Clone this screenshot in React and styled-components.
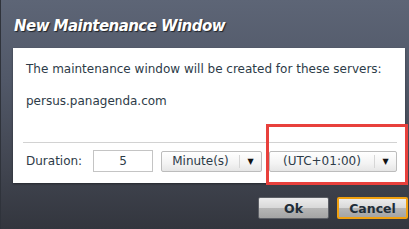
import React from 'react';
import styled, {createGlobalStyle} from 'styled-components';

const GlobalStyle = createGlobalStyle`
  html, body {
    margin: 0;
    padding: 0;
  }
  body {
    width: 409px;
    height: 229px;
    overflow: hidden;
  }
`;

const DialogFrame = styled.div`
  position: relative;
  width: 409px;
  height: 229px;
  box-sizing: border-box;
  display: flex;
  flex-direction: column;
  background: linear-gradient(to bottom, #5d6576 0%, #515868 35%, #40444f 75%, #33363e 100%);
  border-left: 1px solid #2f333b;
  font-family: "DejaVu Sans", Verdana, sans-serif;
`;

const Title = styled.h1`
  margin: 0;
  height: 48px;
  box-sizing: border-box;
  padding: 17px 0 0 13px;
  font-size: 15px;
  font-weight: bold;
  font-style: italic;
  color: #ffffff;
  letter-spacing: -0.55px;
  text-shadow: 1px 1px 1px #1e2229;
`;

const Panel = styled.div`
  margin: 0 4px 0 12px;
  height: 135px;
  box-sizing: border-box;
  background: #ffffff;
  padding: 0 8px 0 10px;
  display: flex;
  flex-direction: column;
  box-shadow: 0 1px 2px rgba(0, 0, 0, 0.4);
`;

const Message = styled.p`
  margin: ${p => p.$top}px 0 0 3px;
  font-size: 12px;
  line-height: 16px;
  color: #2d3b48;
`;

const Divider = styled.div`
  margin-top: ${p => p.$top}px;
  height: 1px;
  background: #d2d2d2;
`;

const DurationRow = styled.div`
  display: flex;
  align-items: center;
  margin-top: 7px;
  padding-left: 3px;
`;

const Label = styled.span`
  font-size: 12px;
  color: #2d3b48;
  width: 67px;
`;

const NumberBox = styled.div`
  width: 60px;
  height: 22px;
  box-sizing: border-box;
  border: 1px solid #c4c4c4;
  display: flex;
  align-items: center;
  justify-content: center;
  font-size: 12px;
  color: #2d3b48;
`;

const Select = styled.div`
  width: ${p => p.$width}px;
  margin-left: ${p => p.$gap}px;
  height: 21px;
  box-sizing: border-box;
  border: 1px solid #bcbcbc;
  border-radius: 2px;
  background: linear-gradient(to bottom, #ffffff 0%, #f3f3f3 60%, #e6e6e6 100%);
  display: flex;
  align-items: center;
  font-size: 12px;
  color: #2d3b48;
`;

const SelectText = styled.span`
  flex: 1;
  text-align: center;
`;

const SelectArrow = styled.span`
  width: 21px;
  height: 13px;
  border-left: 1px solid #d6d6d6;
  display: flex;
  align-items: center;
  justify-content: center;
  font-size: 8px;
  color: #111;
`;

const Buttons = styled.div`
  display: flex;
  justify-content: flex-end;
  gap: 8px;
  padding: 14px 1px 0 0;
`;

const Button = styled.button`
  width: 71px;
  height: 22px;
  box-sizing: border-box;
  padding: 0;
  border: ${p => p.$focused ? '2px solid #f0a010' : '1px solid #5c5f66'};
  border-radius: 2px;
  background: linear-gradient(to bottom, #ececec 0%, #d8d8d8 50%, #b6b6b6 51%, #a4a4a4 100%);
  font-family: "DejaVu Sans", Verdana, sans-serif;
  font-weight: bold;
  font-size: 12.5px;
  color: #1f2d38;
`;

const Annotation = styled.div`
  position: absolute;
  left: 265px;
  top: 124px;
  width: 142px;
  height: 61px;
  box-sizing: border-box;
  border: 3px solid #e8403c;
  pointer-events: none;
`;

function Dropdown({width, gap, label}) {
    return (
        <Select $width={width} $gap={gap}>
            <SelectText>{label}</SelectText>
            <SelectArrow>▼</SelectArrow>
        </Select>
    );
}

export default function App() {
    return (
        <>
            <GlobalStyle/>
            <DialogFrame>
                <Title>New Maintenance Window</Title>
                <Panel>
                    <Message $top={13}>The maintenance window will be created for these servers:</Message>
                    <Message $top={16}>persus.panagenda.com</Message>
                    <Divider $top={33}/>
                    <DurationRow>
                        <Label>Duration:</Label>
                        <NumberBox>5</NumberBox>
                        <Dropdown width={101} gap={8} label="Minute(s)"/>
                        <Dropdown width={128} gap={7} label="(UTC+01:00)"/>
                    </DurationRow>
                </Panel>
                <Buttons>
                    <Button>Ok</Button>
                    <Button $focused>Cancel</Button>
                </Buttons>
                <Annotation/>
            </DialogFrame>
        </>
    );
}
